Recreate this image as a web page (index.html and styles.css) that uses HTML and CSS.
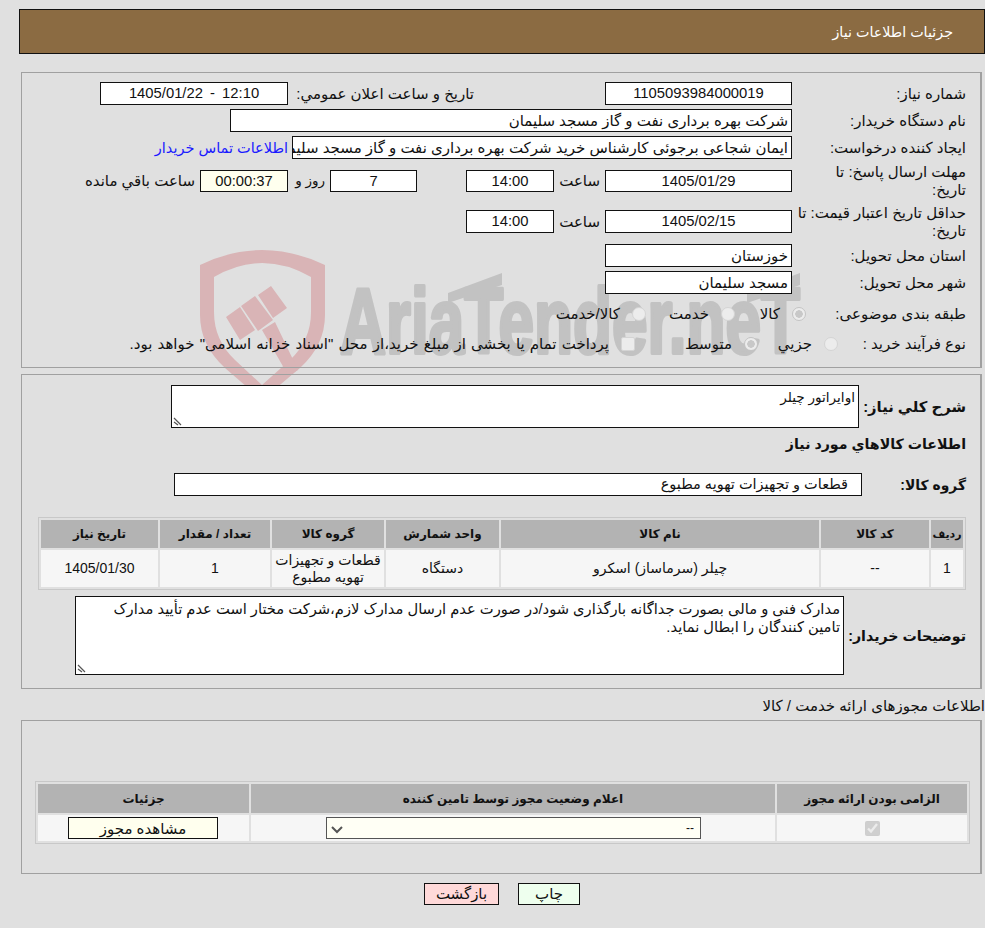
FILE: index.html
```html
<!DOCTYPE html>
<html lang="fa" dir="rtl">
<head>
<meta charset="utf-8">
<title>جزئیات اطلاعات نیاز</title>
<link rel="stylesheet" href="styles.css">
</head>
<body>
<div class="page">
  <svg class="watermark" viewBox="190 245 640 145" width="640" height="145" aria-hidden="true">
    <path class="shield" fill-rule="evenodd" d="M200 265 Q262 235 325 265 V315 Q325 345 300 368 L262 400 L225 368 Q200 345 200 315 Z M214 277 V312 Q214 340 235 360 L262 385 L290 360 Q311 340 311 312 V277 Q262 249 214 277 Z"/>
    <path class="shield" d="M226 317 L240 307 L255 330 L240 340 Z M241 306 L255 296 L273 320 L258 331 Z M258 295 L271 286 L287 308 L273 318 Z M262 330 L275 322 L298 370 L288 375 Z"/>
    <text class="wm-text" x="340" y="353" textLength="460" lengthAdjust="spacingAndGlyphs">AriaTender.neT</text>
    <path class="accent" d="M448 293 L502 273 V285 L448 303 Z M747 293 L800 273 V285 L747 303 Z"/>
  </svg>
  <header class="title-bar">جزئیات اطلاعات نیاز</header>

  <section class="panel panel-info">
    <div class="row r23">
      <label class="lbl">شماره نیاز:</label>
      <div class="box w187 center num">1105093984000019</div>
      <span class="cap c-pub">تاريخ و ساعت اعلان عمومي:</span>
      <div class="box w188 center num stamp">12:10 - 1405/01/22</div>
    </div>
    <div class="row r23 mt4">
      <label class="lbl">نام دستگاه خریدار:</label>
      <div class="box w562">شرکت بهره برداری نفت و گاز مسجد سلیمان</div>
    </div>
    <div class="row r23 mt4">
      <label class="lbl">ایجاد کننده درخواست:</label>
      <div class="box w500">ایمان شجاعی برجوئی کارشناس خرید شرکت بهره برداری نفت و گاز مسجد سلیمان</div>
      <a class="contact" href="#">اطلاعات تماس خریدار</a>
    </div>
    <div class="row r22 mt11">
      <label class="lbl">مهلت ارسال پاسخ: تا<br>تاریخ:</label>
      <div class="box w187 center num">1405/01/29</div>
      <span class="cap c-hour">ساعت</span>
      <div class="box w88 center num">14:00</div>
      <div class="box w87 center num m49">7</div>
      <span class="cap c-day">روز و</span>
      <div class="box w88 center num cream">00:00:37</div>
      <span class="cap c-left">ساعت باقي مانده</span>
    </div>
    <div class="row r23 mt18">
      <label class="lbl">حداقل تاریخ اعتبار قیمت: تا<br>تاریخ:</label>
      <div class="box w187 center num">1405/02/15</div>
      <span class="cap c-hour">ساعت</span>
      <div class="box w88 center num">14:00</div>
    </div>
    <div class="row r23 mt11">
      <label class="lbl">استان محل تحویل:</label>
      <div class="box w187">خوزستان</div>
    </div>
    <div class="row r23 mt4">
      <label class="lbl">شهر محل تحویل:</label>
      <div class="box w187">مسجد سلیمان</div>
    </div>
    <div class="row r23 mt8 options opts-cat">
      <label class="lbl">طبقه بندی موضوعی:</label>
      <input class="opt" type="radio" name="cat1" checked disabled><span class="cap w-k">کالا</span>
      <input class="opt" type="radio" name="cat2" disabled><span class="cap w-kh">خدمت</span>
      <input class="opt" type="radio" name="cat3" disabled><span class="cap">کالا/خدمت</span>
    </div>
    <div class="row r23 mt7 options opts-proc">
      <label class="lbl">نوع فرآیند خرید :</label>
      <input class="opt" type="radio" name="p1" disabled><span class="cap w-j">جزیي</span>
      <input class="opt" type="radio" name="p2" checked disabled><span class="cap w-m">متوسط</span>
      <input class="opt" type="checkbox" disabled><span class="cap long">پرداخت تمام یا بخشی از مبلغ خرید،از محل "اسناد خزانه اسلامی" خواهد بود.</span>
    </div>
  </section>

  <section class="panel panel-need">
    <div class="row desc">
      <label class="lbl-b b-desc">شرح کلي نیاز:</label>
      <div class="area a-desc">اوایراتور چیلر<svg class="grip" viewBox="0 0 10 10"><path d="M1 2 L8 9 M1 6 L5 9"/></svg></div>
    </div>
    <h2 class="goods-title">اطلاعات کالاهاي مورد نیاز</h2>
    <div class="row r23 group">
      <label class="lbl-b b-group">گروه کالا:</label>
      <div class="box w688 indent">قطعات و تجهیزات تهویه مطبوع</div>
    </div>
    <table class="grid goods">
      <thead>
        <tr><th class="g1">ردیف</th><th class="g2">کد کالا</th><th class="g3">نام کالا</th><th class="g4">واحد شمارش</th><th class="g5">گروه کالا</th><th class="g6">تعداد / مقدار</th><th class="g7">تاریخ نیاز</th></tr>
      </thead>
      <tbody>
        <tr><td>1</td><td>--</td><td>چیلر (سرماساز) اسکرو</td><td>دستگاه</td><td>قطعات و تجهیزات تهویه مطبوع</td><td>1</td><td>1405/01/30</td></tr>
      </tbody>
    </table>
    <div class="row notes">
      <label class="lbl-b b-notes">توضیحات خریدار:</label>
      <div class="area a-notes">مدارک فنی و مالی بصورت جداگانه بارگذاری شود/در صورت عدم ارسال مدارک لازم،شرکت مختار است عدم تأیید مدارک تامین کنندگان را ابطال نماید.<svg class="grip" viewBox="0 0 10 10"><path d="M1 2 L8 9 M1 6 L5 9"/></svg></div>
    </div>
  </section>

  <p class="sec-label">اطلاعات مجوزهای ارائه خدمت / کالا</p>

  <section class="panel panel-lic">
    <table class="grid lic">
      <thead>
        <tr><th class="l1">الزامی بودن ارائه مجوز</th><th class="l2">اعلام وضعیت مجوز توسط تامین کننده</th><th class="l3">جزئیات</th></tr>
      </thead>
      <tbody>
        <tr>
          <td><input class="lic-check" type="checkbox" checked disabled></td>
          <td><select class="lic-select"><option>--</option></select></td>
          <td><button class="lic-btn" type="button">مشاهده مجوز</button></td>
        </tr>
      </tbody>
    </table>
  </section>

  <div class="actions">
    <button class="btn print" type="button">چاپ</button>
    <button class="btn back" type="button">بازگشت</button>
  </div>
</div>
</body>
</html>
```
FILE: styles.css
```css
* { box-sizing: border-box; }
html, body { margin: 0; padding: 0; }
body {
  background: #e0e0e0;
  color: #111;
  font-family: "Liberation Sans", "DejaVu Sans", sans-serif;
  font-size: 15px;
  line-height: 18px;
  overflow: hidden;
}
.page { position: relative; width: 985px; height: 928px; padding-top: 9px; }
.watermark { position: absolute; left: 190px; top: 245px; pointer-events: none; }
.shield { fill: #d9b4b6; }
.accent { fill: #c2c2c2; }
.wm-text { fill: #c2c2c2; stroke: #c2c2c2; stroke-width: 4px; stroke-linejoin: round; font-family: "Liberation Sans", sans-serif; font-weight: 700; font-size: 93px; direction: ltr; }

.title-bar {
  position: relative;
  height: 45px;
  margin: 0 0 0 19px;
  padding: 13px 31px 0 0;
  background: #8b6b42;
  border: 1px solid #111;
  color: #fff;
  font-size: 14.3px;
}
.panel { position: relative; margin-left: 21px; margin-right: 3px; border: 1px solid #a0a0a0; border-right-width: 2px; }
.panel-info { height: 296px; margin-top: 18px; padding: 9px 14px 0 0; }
.panel-need { height: 315px; margin-top: 6px; padding: 10px 14px 0 0; }
.panel-lic { height: 154px; padding: 60px 10px 0 0; }

.row { display: flex; align-items: center; }
.r22 { height: 22px; }
.r23 { height: 23px; }
.mt4 { margin-top: 4px; }
.mt7 { margin-top: 7px; }
.mt8 { margin-top: 8px; }
.mt11 { margin-top: 11px; }
.mt18 { margin-top: 18px; }

.lbl { flex: 0 0 174px; padding-left: 2px; }
.cap { white-space: nowrap; }
.long { word-spacing: 1px; }

.box {
  flex: none;
  height: 100%;
  background: #fff;
  border: 1px solid #111;
  padding: 1px 3px 0 1px;
  line-height: 19px;
  white-space: nowrap;
  overflow: hidden;
}
.center { text-align: center; padding: 1px 1px 0; }
.num { font-size: 14.8px; }
.stamp { word-spacing: 3px; }
.cream { background: #ffffee; }
.w87 { width: 87px; }
.w88 { width: 88px; }
.w187 { width: 187px; }
.w188 { width: 188px; }
.w500 { width: 500px; }
.w562 { width: 562px; }
.w688 { width: 688px; }
.m49 { margin-right: 49px; }
.indent { padding-right: 13px; font-size: 14.5px; }
.c-pub { margin-right: 131px; margin-left: 5px; width: 181px; }
.c-hour { width: 51px; padding-right: 5px; }
.c-day { width: 42px; padding-right: 5px; font-size: 13.5px; }
.c-left { padding-right: 5px; }
.contact { margin-right: 4px; color: #1a1aff; text-decoration: none; white-space: nowrap; font-size: 14.5px; }

.opts-cat .lbl { flex-basis: 160px; padding-left: 0; }
.opts-proc .lbl { flex-basis: 128px; padding-left: 0; }
.opt {
  flex: none;
  appearance: none;
  width: 14px;
  height: 14px;
  margin: 0 0 0 12px;
  border: 1px solid #d4d4d4;
  border-radius: 50%;
  background: #ececec;
}
.opt:checked { border: 1px solid #c4c4c4; background: radial-gradient(circle, #c8c8c8 0 3.5px, #ececec 4px); }
.opt[type="checkbox"] { border-radius: 2px; }
.w-k { width: 45px; }
.w-kh { width: 63px; }
.w-j { width: 54px; }
.w-m { width: 97px; }

.lbl-b { font-weight: 700; font-size: 14.2px; white-space: nowrap; }
.desc { height: 43px; }
.b-desc { flex: 0 0 107px; font-size: 14.8px; }
.area { position: relative; flex: none; background: #fff; border: 1px solid #111; padding: 3px 3px 1px 2px; }
.a-desc { width: 688px; height: 43px; font-size: 13.6px; }
.a-notes { width: 769px; height: 79px; padding-left: 30px; font-size: 14.7px; }
.grip { position: absolute; left: 1px; bottom: 1px; width: 10px; height: 10px; }
.grip path { fill: none; stroke: #555; stroke-width: 1.2; }
.goods-title { margin: 6px 0 0; font-size: 14.2px; line-height: 20px; font-weight: 700; }
.group { margin-top: 19px; }
.b-group { flex: 0 0 104px; font-size: 13.9px; }
.notes { margin-top: 6px; height: 79px; }
.b-notes { flex: 0 0 122px; }

.grid { border-collapse: separate; border-spacing: 2px; border: 1px solid #c8c8c8; background: #e0e0e0; table-layout: fixed; text-align: center; }
.grid th { background: #b3b3b3; font-size: 12px; font-weight: 700; padding: 0; }
.grid .g1 { font-size: 11px; }
.grid td { background: #f6f6f6; padding: 0; line-height: 17px; font-size: 14px; }
.goods { width: 928px; margin-top: 21px; height: 73px; }
.goods thead tr { height: 28px; }
.goods tbody tr { height: 37px; }
.g1 { width: 32px; } .g2 { width: 108px; } .g3 { width: 318px; } .g4 { width: 113px; } .g5 { width: 112px; } .g6 { width: 110px; } .g7 { width: 117px; }

.sec-label { margin: 8px 0 6px; height: 17px; line-height: 17px; }
.lic { width: 934px; height: 63px; }
.lic thead tr { height: 29px; }
.lic tbody tr { height: 26px; }
.l1 { width: 190px; } .l2 { width: 524px; } .l3 { width: 211px; }
.lic-check { display: block; margin: 0 auto; width: 15px; height: 15px; }
.lic-select {
  display: block;
  appearance: none;
  width: 375px;
  height: 22px;
  margin: 0 74px 0 0;
  padding: 0 6px;
  background: #fffff5 url("data:image/svg+xml,%3Csvg xmlns='http://www.w3.org/2000/svg' width='12' height='8'%3E%3Cpath d='M1 1 L6 6 L11 1' fill='none' stroke='%23555' stroke-width='2'/%3E%3C/svg%3E") no-repeat 4px 8px;
  border: 1px solid #555;
  border-radius: 0;
  font: inherit;
  font-size: 12px;
  color: #111;
}
.lic-btn { display: block; width: 150px; height: 22px; margin: 0 31px 0 0; padding: 0; background: #ffffee; border: 1px solid #111; border-radius: 0; font: inherit; font-size: 15px; color: #111; }

.actions { display: flex; justify-content: center; margin-top: 9px; padding-left: 19px; gap: 19px; }
.btn { height: 22px; padding: 0; border: 1px solid #111; border-radius: 0; font: inherit; color: #111; }
.print { width: 62px; background: #eeffee; }
.back { width: 75px; background: #ffd9d9; }
```
